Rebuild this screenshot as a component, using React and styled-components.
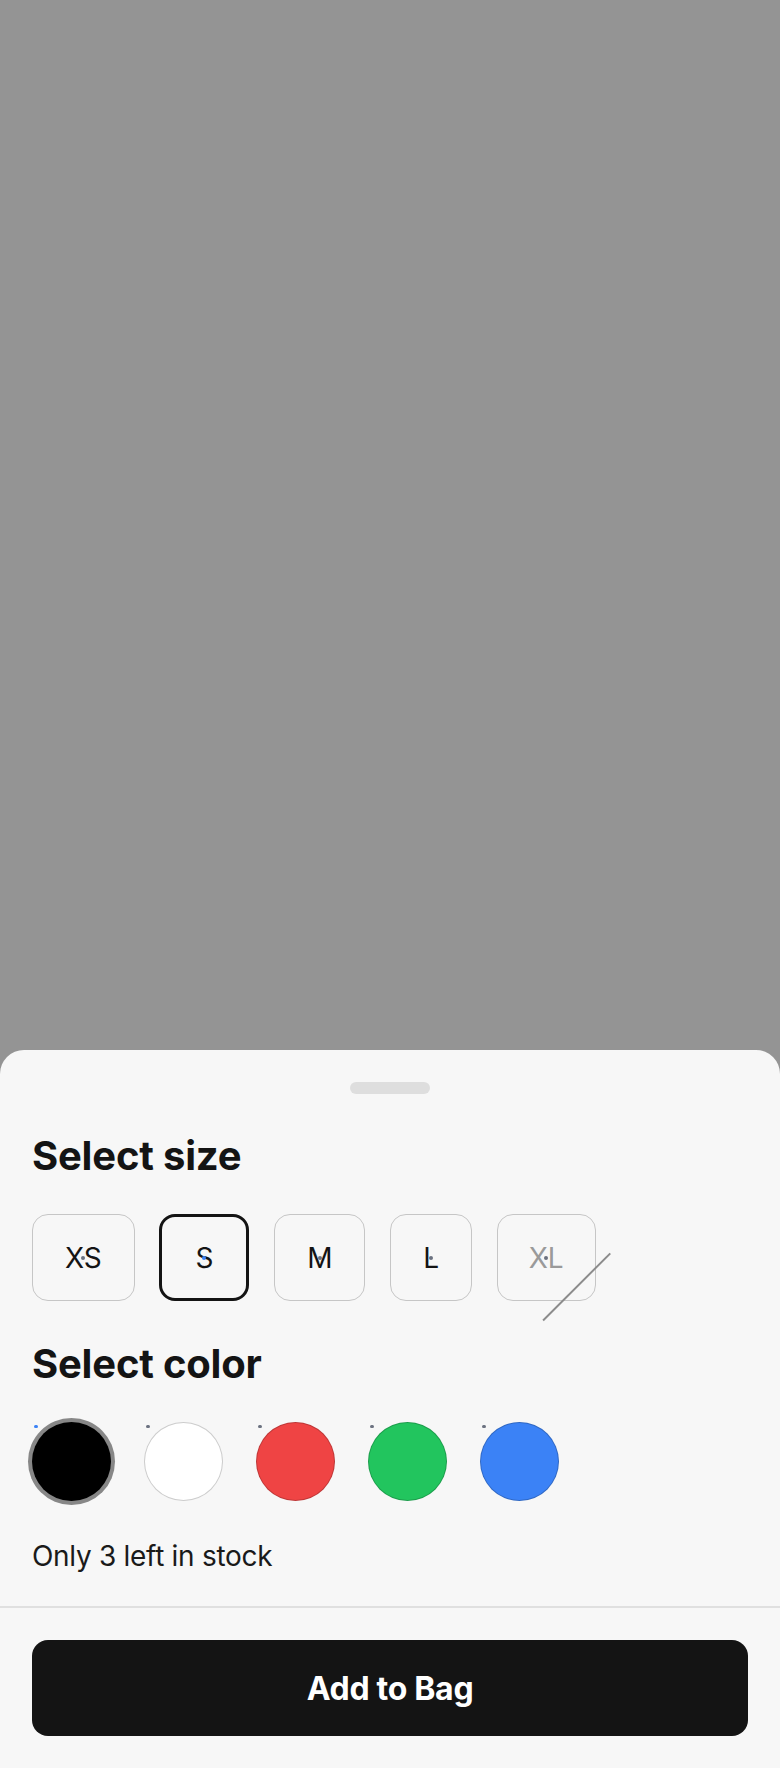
import React, { useState } from "react";
import styled, { createGlobalStyle, css } from "styled-components";

const GlobalStyle = createGlobalStyle`
  *, *::before, *::after { box-sizing: border-box; }
  html, body { margin: 0; padding: 0; }
  body {
    font-family: Inter, "Noto Sans", "Liberation Sans", sans-serif;
    background: #949494;
    color: #141414;
  }
`;

const Page = styled.div`
  min-height: 1768px;
  display: flex;
  flex-direction: column;
  justify-content: flex-end;
  background: #949494;
`;

const Sheet = styled.div`
  background: #f7f7f7;
  border-radius: 24px 24px 0 0;
  display: flex;
  flex-direction: column;
`;

const Body = styled.div`
  display: flex;
  flex-direction: column;
  padding: 32px 32px 30px;
`;

const Handle = styled.div`
  align-self: center;
  width: 80px;
  height: 12px;
  border-radius: 6px;
  background: #dedede;
  margin-bottom: 38px;
`;

const Title = styled.h2`
  margin: 0 0 34px;
  font-size: 40px;
  line-height: 48px;
  font-weight: 700;
  color: #141414;
  letter-spacing: -0.2px;
`;

const SizeRow = styled.div`
  display: flex;
  gap: 24.7px;
  margin-bottom: 39px;
`;

const SizeButton = styled.button`
  position: relative;
  height: 87px;
  padding: 0 32px;
  display: flex;
  align-items: center;
  justify-content: center;
  background: transparent;
  border: 1.5px solid #c6c6c6;
  border-radius: 16px;
  font-family: inherit;
  font-size: 28px;
  line-height: 1;
  font-weight: 400;
  color: #141414;
  cursor: pointer;
  ${(p) =>
    p.$selected &&
    css`
      border: 3px solid #141414;
      padding: 0 33px;
    `}
  ${(p) =>
    p.$disabled &&
    css`
      color: #9a9a9a;
      cursor: default;
      padding: 0 31px;
    `}
`;

const CenterDot = styled.span`
  position: absolute;
  left: 50%;
  top: 50%;
  width: 4px;
  height: 4px;
  margin: -2px 0 0 -2px;
  border-radius: 50%;
  background: ${(p) => (p.$active ? "#3b82f6" : "#6b7280")};
`;

const Slash = styled.span`
  position: absolute;
  left: 31px;
  top: 71px;
  width: 95px;
  height: 1.5px;
  background: #8c8c8c;
  transform: rotate(-45deg);
`;

const SwatchRow = styled.div`
  display: flex;
  gap: 33px;
  margin-bottom: 35px;
`;

const SwatchSlot = styled.label`
  position: relative;
  display: block;
  width: 79px;
  height: 79px;
  cursor: pointer;
`;

const Swatch = styled.span`
  display: block;
  width: 79px;
  height: 79px;
  border-radius: 50%;
  background: ${(p) => p.$color};
  border: 1.5px solid rgba(0, 0, 0, 0.2);
  ${(p) =>
    p.$selected &&
    css`
      box-shadow: 0 0 0 4px #878787;
    `}
`;

const CornerDot = styled.span`
  position: absolute;
  left: 2px;
  top: 2.5px;
  width: 3.5px;
  height: 3.5px;
  border-radius: 50%;
  background: ${(p) => (p.$active ? "#3b82f6" : "#6b7280")};
`;

const Stock = styled.p`
  margin: 0;
  font-size: 28px;
  line-height: 40px;
  color: #1a1a1a;
  letter-spacing: -0.3px;
`;

const Footer = styled.div`
  border-top: 2px solid #e0e0e0;
  padding: 32px;
`;

const AddButton = styled.button`
  width: 100%;
  height: 96px;
  border: none;
  border-radius: 16px;
  background: #141414;
  color: #ffffff;
  font-family: inherit;
  font-size: 32px;
  font-weight: 700;
  letter-spacing: -0.3px;
  cursor: pointer;
`;

const sizes = [
  { label: "XS" },
  { label: "S" },
  { label: "M" },
  { label: "L" },
  { label: "XL", disabled: true },
];

const colors = [
  { name: "Black", value: "#000000" },
  { name: "White", value: "#ffffff" },
  { name: "Red", value: "#ef4444" },
  { name: "Green", value: "#22c55e" },
  { name: "Blue", value: "#3b82f6" },
];

export default function App() {
  const [size, setSize] = useState("S");
  const [color, setColor] = useState("Black");

  return (
    <>
      <GlobalStyle />
      <Page>
        <Sheet>
          <Body>
            <Handle />
            <Title>Select size</Title>
            <SizeRow>
              {sizes.map((s) => (
                <SizeButton
                  key={s.label}
                  $selected={size === s.label}
                  $disabled={s.disabled}
                  onClick={() => !s.disabled && setSize(s.label)}
                >
                  {s.label}
                  <CenterDot $active={size === s.label} />
                  {s.disabled && <Slash />}
                </SizeButton>
              ))}
            </SizeRow>
            <Title>Select color</Title>
            <SwatchRow>
              {colors.map((c) => (
                <SwatchSlot key={c.name} onClick={() => setColor(c.name)}>
                  <Swatch $color={c.value} $selected={color === c.name} />
                  <CornerDot $active={color === c.name} />
                </SwatchSlot>
              ))}
            </SwatchRow>
            <Stock>Only 3 left in stock</Stock>
          </Body>
          <Footer>
            <AddButton>Add to Bag</AddButton>
          </Footer>
        </Sheet>
      </Page>
    </>
  );
}
